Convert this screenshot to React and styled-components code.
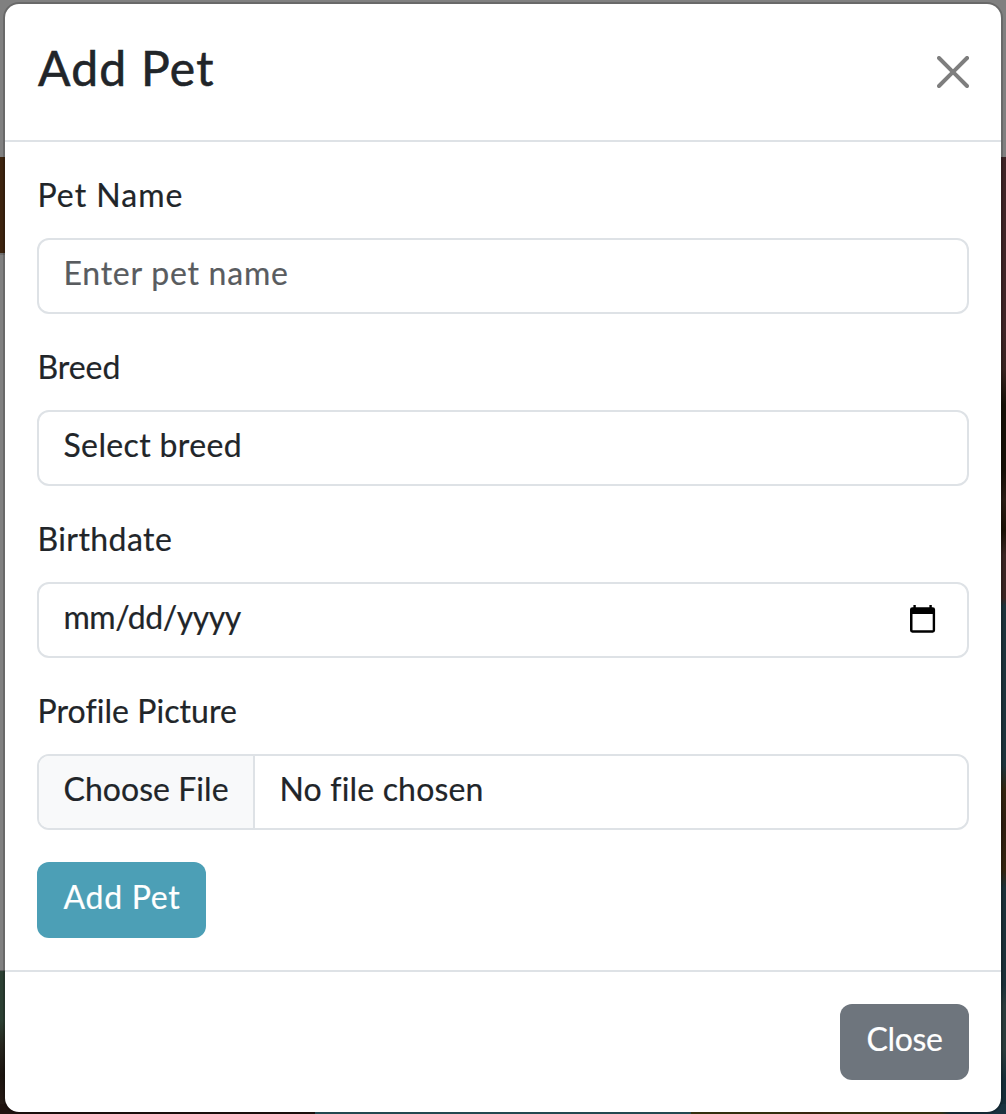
import React from "react";
import styled, { createGlobalStyle } from "styled-components";

const GlobalStyle = createGlobalStyle`
  *, *::before, *::after { box-sizing: border-box; }
  body {
    margin: 0;
    font-family: Lato, "Open Sans", sans-serif;
    font-size: 32px;
    color: #212529;
  }
`;

const Backdrop = styled.div`
  height: 1114px;
  padding: 2px 3px 0;
  background-color: #808080;
  background-image:
    linear-gradient(90deg, #20130f 0 315px, #2b5862 315px 691px, #3e3a12 691px 780px, #452c12 810px, #3e3a12 850px 940px, #19323f 950px),
    linear-gradient(180deg, #808080 0 157px, #3d240f 157px 253px, #6e6e6e 253px 255px, #808080 255px 970px, #5c5c5c 970px 971px, #2c4033 971px 1020px, #27261e 1045px, #1b140f 1075px, #2a1c16 1114px),
    linear-gradient(180deg, #808080 0 157px, #3e2426 157px 330px, #37221f 370px, #150f06 405px 470px, #2a1b14 500px, #1a1005 530px, #3a2523 555px 598px, #1c333c 606px 765px, #33240f 790px, #2e1d10 825px, #33240f 870px, #1b3039 888px 985px, #2a3b3c 1005px 1050px, #152d38 1080px 1114px);
  background-size: 1006px 10px, 30px 1114px, 30px 1114px;
  background-position: left bottom, left top, right top;
  background-repeat: no-repeat;
`;

const Modal = styled.section`
  height: 1112px;
  border: 2px solid rgba(0, 0, 0, 0.175);
  border-radius: 16px;
  background: #fff;
  background-clip: padding-box;
`;

const Header = styled.header`
  display: flex;
  align-items: center;
  justify-content: space-between;
  height: 138px;
  padding: 32px;
  border-bottom: 2px solid #dee2e6;
`;

const Title = styled.h1`
  margin: 0;
  padding: 2px 0 11px 1px;
  font-size: 48px;
  font-weight: 400;
  line-height: 59px;
  letter-spacing: 1.25px;
  -webkit-text-stroke: 0.6px #212529;
`;

const IconButton = styled.button`
  display: flex;
  padding: 0;
  border: 0;
  background: none;
  color: #000;
  opacity: 0.5;
`;

const Form = styled.form`
  display: flex;
  flex-direction: column;
  align-items: stretch;
  gap: 32px;
  padding: 32px;
`;

const Group = styled.div`
  display: flex;
  flex-direction: column;
  gap: 16px;
`;

const Text = styled.span`
  display: block;
  padding: 1px 0 7px 0.5px;
  line-height: 40px;
  white-space: nowrap;
  letter-spacing: ${(p) => p.$tracking || 0}px;
  -webkit-text-stroke: 0.2px currentColor;
`;

const Control = styled.div`
  display: flex;
  align-items: center;
  justify-content: space-between;
  height: 76px;
  padding: 12px 24px;
  border: 2px solid #dee2e6;
  border-radius: 12px;
  color: ${(p) => (p.$muted ? "#595c5f" : "#212529")};
`;

const FileControl = styled(Control)`
  justify-content: flex-start;
  padding: 0;
  overflow: hidden;
`;

const FileButton = styled.div`
  flex: none;
  width: 216px;
  height: 72px;
  padding: 12px 24px;
  border-right: 2px solid #dee2e6;
  background: #f8f9fa;
`;

const FileName = styled.div`
  padding: 12px 24px;
`;

const CalendarIcon = styled.svg`
  flex: none;
  width: 32px;
  height: 32px;
  margin-right: 2px;
`;

const Button = styled.button`
  display: flex;
  align-self: flex-start;
  width: ${(p) => p.$width}px;
  height: 76px;
  padding: 14px 26px;
  border: 0;
  border-radius: 12px;
  background: ${(p) => p.$color};
  color: #fff;
  font: inherit;
`;

const Footer = styled.footer`
  display: flex;
  justify-content: flex-end;
  padding: 32px;
  border-top: 2px solid #dee2e6;
`;

function Field({ label, tracking, children }) {
  return (
    <Group>
      <Text $tracking={tracking}>{label}</Text>
      {children}
    </Group>
  );
}

export default function App() {
  return (
    <>
      <GlobalStyle />
      <Backdrop>
        <Modal role="dialog" aria-modal="true">
          <Header>
            <Title>Add Pet</Title>
            <IconButton type="button">
              <svg width="32" height="32" viewBox="0 0 16 16" fill="currentColor">
                <path d="M.293.293a1 1 0 0 1 1.414 0L8 6.586 14.293.293a1 1 0 1 1 1.414 1.414L9.414 8l6.293 6.293a1 1 0 0 1-1.414 1.414L8 9.414l-6.293 6.293a1 1 0 0 1-1.414-1.414L6.586 8 .293 1.707a1 1 0 0 1 0-1.414" />
              </svg>
            </IconButton>
          </Header>
          <Form>
            <Field label="Pet Name" tracking={1}>
              <Control $muted>
                <Text $tracking={0.76}>Enter pet name</Text>
              </Control>
            </Field>
            <Field label="Breed" tracking={-0.05}>
              <Control>
                <Text $tracking={0.36}>Select breed</Text>
              </Control>
            </Field>
            <Field label="Birthdate" tracking={0.42}>
              <Control>
                <Text $tracking={-0.45}>mm/dd/yyyy</Text>
                <CalendarIcon viewBox="0 0 32 32">
                  <path
                    fill="#000"
                    fillRule="evenodd"
                    d="M4.4 1h2.4v2.2h13.6V1h2.4v2.2h.9a2.4 2.4 0 0 1 2.4 2.4V26.3a2.4 2.4 0 0 1-2.4 2.4H3.4a2.4 2.4 0 0 1-2.4-2.4V5.6a2.4 2.4 0 0 1 2.4-2.4h1zM3.5 10v16.300h20.200V10z"
                  />
                </CalendarIcon>
              </Control>
            </Field>
            <Field label="Profile Picture" tracking={0.06}>
              <FileControl>
                <FileButton>
                  <Text $tracking={0.04}>Choose File</Text>
                </FileButton>
                <FileName>
                  <Text $tracking={0.17}>No file chosen</Text>
                </FileName>
              </FileControl>
            </Field>
            <Button type="button" $width={169} $color="#4c9fb6">
              <Text $tracking={0.7}>Add Pet</Text>
            </Button>
          </Form>
          <Footer>
            <Button type="button" $width={129} $color="#6e757d">
              <Text $tracking={-0.35}>Close</Text>
            </Button>
          </Footer>
        </Modal>
      </Backdrop>
    </>
  );
}
